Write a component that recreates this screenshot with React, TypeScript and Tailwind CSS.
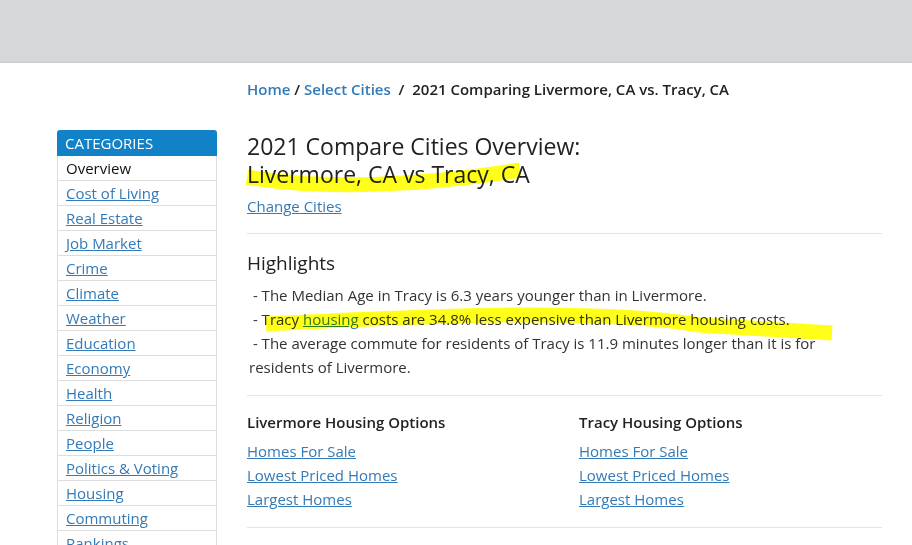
import React from "react";

const categories = [
    "Cost of Living",
    "Real Estate",
    "Job Market",
    "Crime",
    "Climate",
    "Weather",
    "Education",
    "Economy",
    "Health",
    "Religion",
    "People",
    "Politics & Voting",
    "Housing",
    "Commuting",
    "Rankings",
];

const housingLinks = ["Homes For Sale", "Lowest Priced Homes", "Largest Homes"];

const font = { fontFamily: '"Open Sans", "Noto Sans", Arial, sans-serif' };

const Sidebar = () => (
    <div className="w-[160px] shrink-0 mt-[67px]">
        <div className="bg-[#1282c8] text-white text-[15px] leading-[26px] px-2 rounded-t-[3px]">
            CATEGORIES
        </div>
        <div className="border-x border-[#dddddd]">
            <div className="px-2 h-[25px] leading-[25px] text-[15px] text-[#111] border-b border-[#dddddd]">
                Overview
            </div>
            {categories.map((c) => (
                <div
                    key={c}
                    className="px-2 h-[25px] leading-[25px] text-[15px] border-b border-[#dddddd]"
                >
                    <a href="#" className="text-[#337ab7] underline">
                        {c}
                    </a>
                </div>
            ))}
        </div>
    </div>
);

const App = () => {
    return (
        <div className="w-[912px] h-[545px] overflow-hidden bg-white text-[#222]" style={font}>
            <div className="h-[63px] bg-[#d6d7d9] border-b border-[#c9cacc]" />
            <div className="flex pl-[57px] gap-[30px]">
                <Sidebar />
                <div className="relative w-[635px]">
                    <div className="pt-[15px] text-[15px] font-semibold leading-[22px]">
                        <a href="#" className="text-[#337ab7]">Home</a>
                        <span className="text-[#222]"> / </span>
                        <a href="#" className="text-[#337ab7]">Select Cities</a>
                        <span className="text-[#222]">&nbsp; / &nbsp;2021 Comparing Livermore, CA vs. Tracy, CA</span>
                    </div>

                    <h1 className="mt-[32px] text-[23px] leading-[28px] font-medium text-[#222]">
                        2021 Compare Cities Overview:
                        <br />
                        Livermore, CA vs Tracy, CA
                    </h1>
                    <a href="#" className="block mt-[7px] text-[15px] leading-[22px] text-[#337ab7] underline">
                        Change Cities
                    </a>

                    <div className="mt-[16px] border-t border-[#e4e4e4]" />

                    <h2 className="mt-[17px] text-[19px] leading-[24px] font-medium text-[#222]">Highlights</h2>
                    <div className="mt-[8px] text-[15px] leading-[24px] text-[#333] pl-[2px]">
                        <div>&nbsp;- The Median Age in Tracy is 6.3 years younger than in Livermore.</div>
                        <div>
                            &nbsp;- Tracy{" "}
                            <a href="#" className="text-[#337ab7] underline">
                                housing
                            </a>{" "}
                            costs are 34.8% less expensive than Livermore housing costs.
                        </div>
                        <div>
                            &nbsp;- The average commute for residents of Tracy is 11.9 minutes longer than it is for
                            residents of Livermore.
                        </div>
                    </div>

                    <div className="mt-[16px] border-t border-[#e4e4e4]" />

                    <div className="mt-[15px] grid grid-cols-[332px_1fr]">
                        {["Livermore", "Tracy"].map((city) => (
                            <div key={city}>
                                <div className="text-[15px] font-semibold leading-[22px] text-[#222]">
                                    {city} Housing Options
                                </div>
                                <div className="mt-[6px] flex flex-col">
                                    {housingLinks.map((l) => (
                                        <a key={l} href="#" className="text-[15px] leading-[24px] text-[#337ab7] underline">
                                            {l}
                                        </a>
                                    ))}
                                </div>
                            </div>
                        ))}
                    </div>

                    <div className="mt-[16px] border-t border-[#e4e4e4]" />

                    <svg
                        className="absolute left-[-247px] top-[-63px] pointer-events-none mix-blend-multiply"
                        width="912"
                        height="545"
                    >
                        <path
                            d="M247 177 C 320 190, 420 186, 520 170"
                            stroke="#ffff1a"
                            strokeWidth="15"
                            fill="none"
                            strokeLinecap="butt"
                        />
                        <path
                            d="M266 324 C 420 316, 600 308, 700 325 L 832 333"
                            stroke="#ffff1a"
                            strokeWidth="15"
                            fill="none"
                            strokeLinecap="butt"
                        />
                    </svg>
                </div>
            </div>
        </div>
    );
};

export default App;
